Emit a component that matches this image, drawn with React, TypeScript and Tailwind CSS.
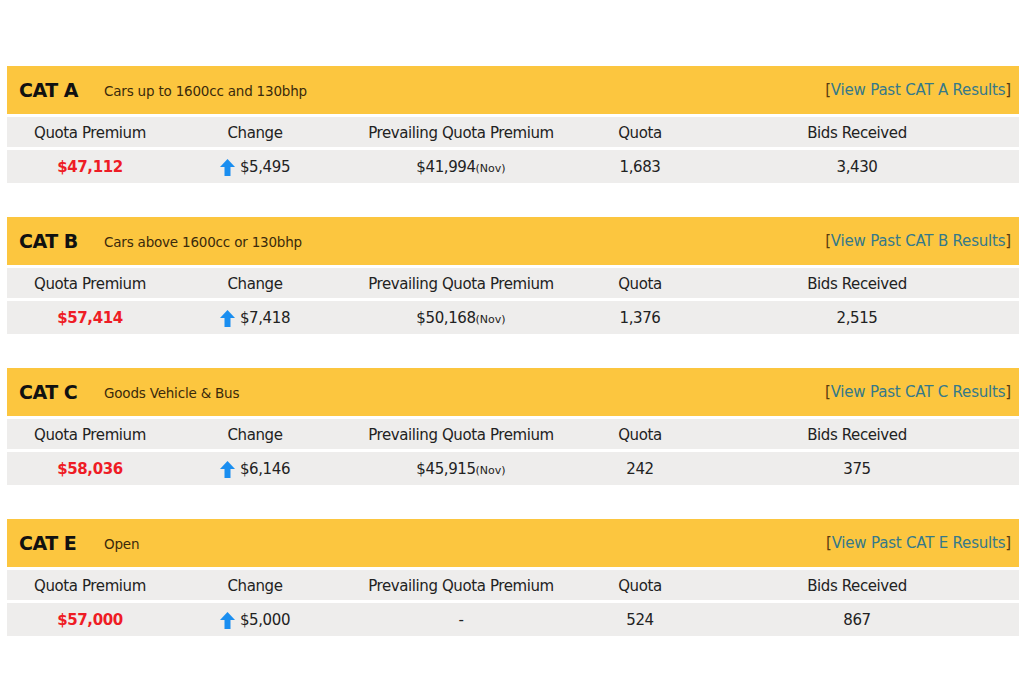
const cats = [
  { code: "A", desc: "Cars up to 1600cc and 130bhp", premium: "$47,112", change: "$5,495", prevailing: "$41,994", quota: "1,683", bids: "3,430" },
  { code: "B", desc: "Cars above 1600cc or 130bhp", premium: "$57,414", change: "$7,418", prevailing: "$50,168", quota: "1,376", bids: "2,515" },
  { code: "C", desc: "Goods Vehicle & Bus", premium: "$58,036", change: "$6,146", prevailing: "$45,915", quota: "242", bids: "375" },
  { code: "E", desc: "Open", premium: "$57,000", change: "$5,000", prevailing: "", quota: "524", bids: "867" },
];

function UpArrow() {
  return (
    <svg width="15" height="17" viewBox="0 0 15 17" className="mr-[5px]">
      <polygon points="7.5,0 15,8 10.5,8 10.5,17 4.5,17 4.5,8 0,8" fill="#1a8ef0" />
    </svg>
  );
}

const cols = "grid grid-cols-[166px_164px_248px_110px_1fr] items-center";

export default function App() {
  return (
    <div className="min-h-[683px] bg-white pt-[66px] px-[7px] text-[#1a1a1a]" style={{ fontFamily: "'DejaVu Sans', Verdana, sans-serif" }}>
      {cats.map((c) => (
        <div key={c.code} className="mb-[34px] w-[1012px]">
          <div className="flex h-[48px] items-center bg-[#fcc63f] pl-[12px] pr-[8px]">
            <span className="w-[85px] pt-[1px] text-[19px] font-bold tracking-[-0.5px] text-[#111]">CAT {c.code}</span>
            <span className="pt-[2px] text-[13.5px] tracking-[-0.2px] text-[#3a2a0c]">{c.desc}</span>
            <span className="ml-auto text-[15px] tracking-[-0.2px]">
              <span className="text-[#5a3c10]">[</span>
              <span className="text-[#35798a]">View Past CAT {c.code} Results</span>
              <span className="text-[#5a3c10]">]</span>
            </span>
          </div>
          <div className={`${cols} mt-[3px] h-[30px] bg-[#eeedec] pt-[2px] text-center text-[15px] tracking-[-0.4px] text-[#222]`}>
            <div>Quota Premium</div>
            <div>Change</div>
            <div>Prevailing Quota Premium</div>
            <div>Quota</div>
            <div>Bids Received</div>
          </div>
          <div className={`${cols} mt-[3px] h-[33px] bg-[#eeedec] pt-[2px] text-center text-[15px] tracking-[-0.4px] text-[#222]`}>
            <div className="font-bold text-[#ee1c25]">{c.premium}</div>
            <div className="flex items-center justify-center">
              <UpArrow />
              {c.change}
            </div>
            <div>
              {c.prevailing ? (
                <>
                  {c.prevailing}
                  <span className="text-[11px] tracking-normal">(Nov)</span>
                </>
              ) : (
                "-"
              )}
            </div>
            <div>{c.quota}</div>
            <div>{c.bids}</div>
          </div>
        </div>
      ))}
    </div>
  );
}
